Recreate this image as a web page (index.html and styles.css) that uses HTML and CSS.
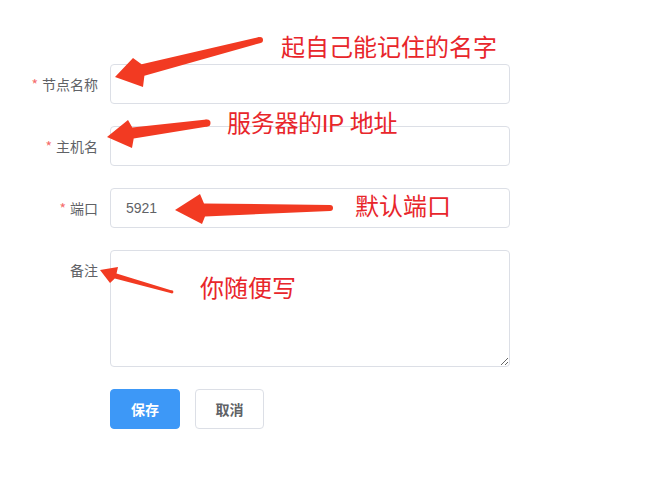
FILE: index.html
```html
<!DOCTYPE html>
<html lang="zh-CN">
<head>
<meta charset="utf-8">
<title>节点</title>
<link rel="stylesheet" href="styles.css">
</head>
<body>
<div class="page">
  <form class="form">
    <div class="form-item">
      <label class="form-label is-required">节点名称</label>
      <div class="form-content"><input class="input" type="text" value=""></div>
    </div>
    <div class="form-item">
      <label class="form-label is-required">主机名</label>
      <div class="form-content"><input class="input" type="text" value=""></div>
    </div>
    <div class="form-item">
      <label class="form-label is-required">端口</label>
      <div class="form-content"><input class="input" type="text" value="5921"></div>
    </div>
    <div class="form-item">
      <label class="form-label">备注</label>
      <div class="form-content"><textarea class="textarea"></textarea></div>
    </div>
    <div class="form-item actions">
      <div class="form-content">
        <button type="button" class="btn btn-primary">保存</button>
        <button type="button" class="btn btn-default">取消</button>
      </div>
    </div>
  </form>

  <svg class="arrows" width="672" height="488" viewBox="0 0 672 488">
    <g fill="#f23a22">
      <polygon points="259.3,37.1 141.6,64.2 133,58 115,77 143,87 144.4,75.8 260.7,42.9"/>
      <circle cx="260" cy="40" r="3"/>
      <polygon points="206.5,119.5 132.3,127.6 128,120 107,137 132,148 133.7,138.4 207.5,126.5"/>
      <circle cx="207" cy="123" r="3.5"/>
      <polygon points="330,205 204,203.5 200,194 175,210 202,224 205,216.5 330,211"/>
      <circle cx="330" cy="208" r="3"/>
      <polygon points="172.6,290.8 116.5,273.6 118,267 100,270 110,283 114.8,278.5 171.4,293.2"/>
      <circle cx="172" cy="292" r="1.4"/>
    </g>
  </svg>

  <span class="note note-1">起自己能记住的名字</span>
  <span class="note note-2">服务器的IP 地址</span>
  <span class="note note-3">默认端口</span>
  <span class="note note-4">你随便写</span>
</div>
</body>
</html>
```
FILE: styles.css
```css
html, body {
  margin: 0;
  padding: 0;
  background: #ffffff;
}
body {
  font-family: "Liberation Sans", "Noto Sans CJK SC", sans-serif;
  font-size: 14px;
  color: #606266;
}
.page {
  position: relative;
  width: 672px;
  height: 488px;
  overflow: hidden;
}
.form {
  margin: 0;
  padding-top: 64px;
}
.form-item {
  display: flex;
  align-items: flex-start;
  margin-bottom: 22px;
}
.form-label {
  flex: none;
  width: 110px;
  height: 40px;
  box-sizing: border-box;
  padding-right: 12px;
  text-align: right;
  line-height: 40px;
  font-size: 14px;
  color: #606266;
  font-family: "Noto Sans CJK SC", sans-serif;
  overflow: visible;
}
.form-label.is-required::before {
  content: "*";
  color: #f56c6c;
  margin-right: 4px;
}
.form-content {
  width: 400px;
}
.actions .form-content {
  margin-left: 110px;
  display: flex;
  gap: 15px;
}
.input {
  display: block;
  width: 400px;
  height: 40px;
  box-sizing: border-box;
  border: 1px solid #dcdfe6;
  border-radius: 4px;
  padding: 0 15px;
  margin: 0;
  font-family: "Liberation Sans", "Noto Sans CJK SC", sans-serif;
  font-size: 14px;
  color: #606266;
  outline: none;
  background: #fff;
}
.textarea {
  display: block;
  width: 400px;
  height: 117px;
  box-sizing: border-box;
  border: 1px solid #dcdfe6;
  border-radius: 4px;
  padding: 5px 15px;
  font-family: "Liberation Sans", "Noto Sans CJK SC", sans-serif;
  font-size: 14px;
  color: #606266;
  outline: none;
  margin: 0;
}
.btn {
  height: 40px;
  box-sizing: border-box;
  padding: 0;
  margin: 0;
  border-radius: 4px;
  font-size: 14px;
  font-weight: 700;
  font-family: "Noto Sans CJK SC", sans-serif;
  white-space: nowrap;
  text-align: center;
  cursor: pointer;
}
.btn-primary {
  width: 70px;
  background: #3d98f7;
  border: 1px solid #3d98f7;
  color: #ffffff;
}
.btn-default {
  width: 69px;
  background: #ffffff;
  border: 1px solid #dcdfe6;
  color: #606266;
}
.arrows {
  position: absolute;
  left: 0;
  top: 0;
  pointer-events: none;
}
.note {
  position: absolute;
  font-family: "Liberation Sans", "Noto Sans CJK SC", sans-serif;
  font-size: 24px;
  line-height: 24px;
  color: #e8262b;
  white-space: nowrap;
}
.note-2 { letter-spacing: -0.3px; }
.note-1 { left: 281px; top: 36px; }
.note-2 { left: 227px; top: 112px; }
.note-3 { left: 355px; top: 195px; }
.note-4 { left: 200px; top: 277px; }
```
